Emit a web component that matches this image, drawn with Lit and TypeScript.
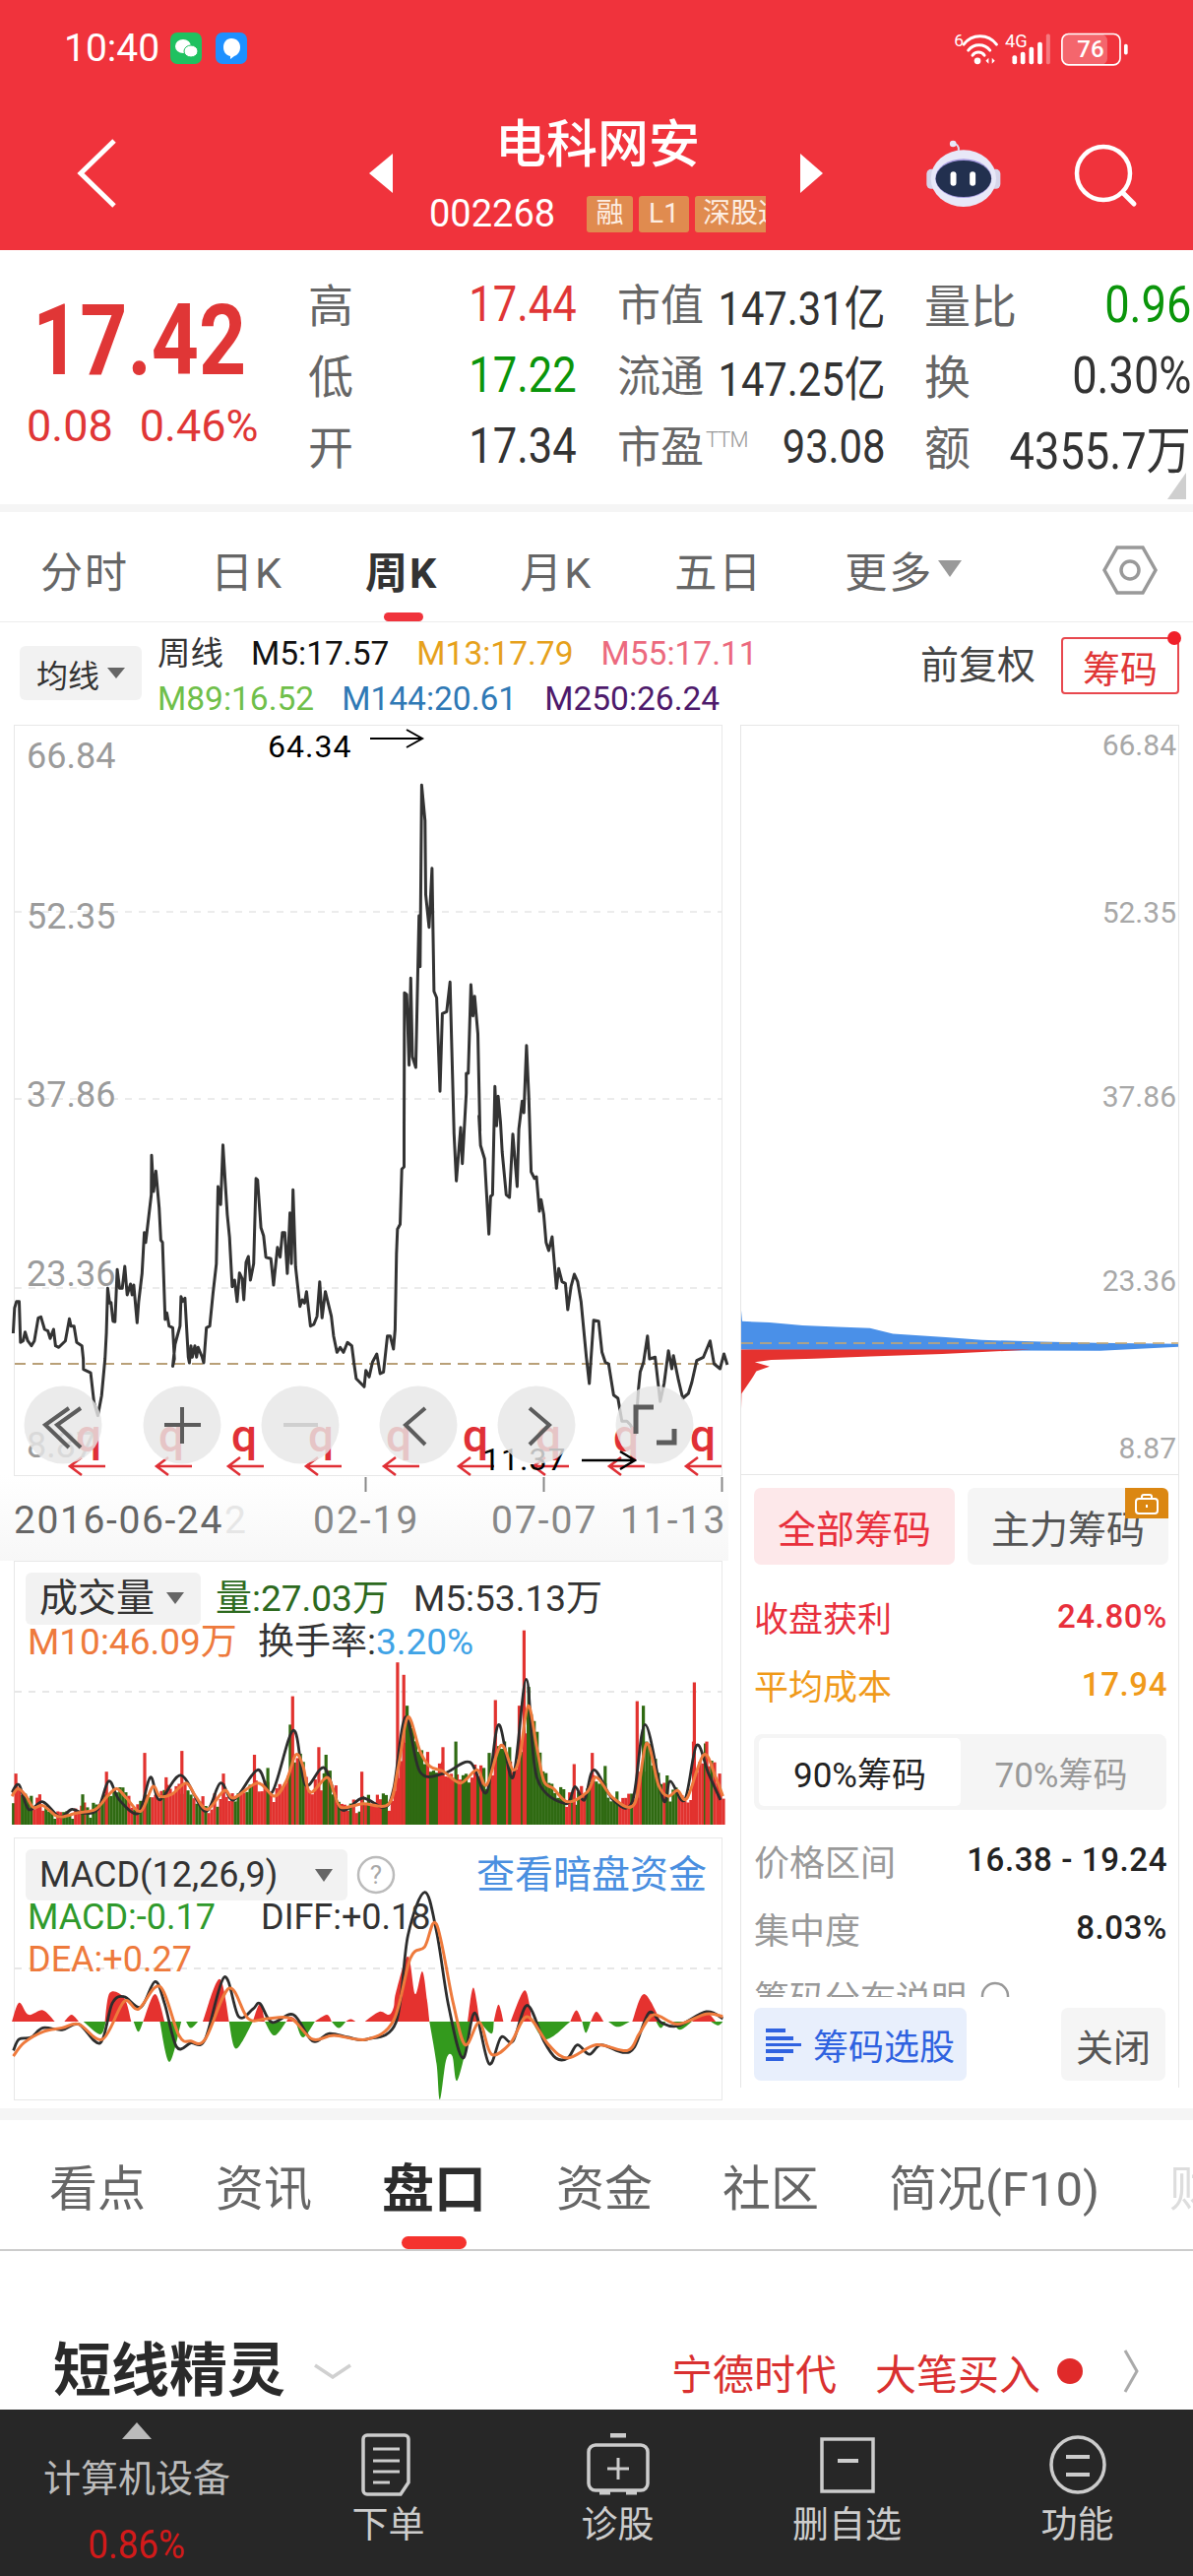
import { LitElement, html, css, svg } from "lit";
import { customElement } from "lit/decorators.js";

type P = [number, number];
const flat = (a: number[]): P[] => { const r: P[] = []; for (let i = 0; i + 1 < a.length; i += 2) r.push([a[i], a[i + 1]]); return r; };
const conv = (a: number[], ox: number, oy: number, sx: number, sy: number): P[] => flat(a).map(([x, y]) => [ox + x / sx, oy + y / sy]);
const str = (p: P[]) => p.map(([x, y]) => `${x.toFixed(1)},${y.toFixed(1)}`).join(" ");
const smooth = (p: P[]) => {
  let d = `M${p[0][0].toFixed(1)} ${p[0][1].toFixed(1)}`;
  for (let i = 0; i < p.length - 1; i++) {
    const a = p[Math.max(0, i - 1)], b = p[i], c = p[i + 1], e = p[Math.min(p.length - 1, i + 2)];
    d += `C${(b[0] + (c[0] - a[0]) / 6).toFixed(1)} ${(b[1] + (c[1] - a[1]) / 6).toFixed(1)} ${(c[0] - (e[0] - b[0]) / 6).toFixed(1)} ${(c[1] - (e[1] - b[1]) / 6).toFixed(1)} ${c[0].toFixed(1)} ${c[1].toFixed(1)}`;
  }
  return d;
};

const z7 = (a: number[]) => conv(a, 0, 1000, 2.98, 3);
const z8 = (a: number[]) => conv(a, 370, 780, 2.96, 3);
const z9 = (a: number[]) => conv(a, 370, 1100, 2.96, 3);
const z2 = (a: number[]) => conv(a, 0, 520, 2.063, 1.493);
const z6 = (a: number[]) => conv(a, 0, 1340, 2.1, 3);

const priceLine: P[] = [
  ...z7([40,1062,44,985,50,965,58,965,62,1090,70,1085,76,1058,84,1085,95,1100,104,1085,116,1015,124,1012,135,1050,145,1055,152,1078,162,1050,168,1100,178,1105,198,1085,210,1018,215,1040,224,1040,232,1090,248,1100,252,1140]),
  ...z2([175,1300,190,1305,197,1350,205,1370,213,1340]),
  ...z7([318,1140,322,1060,326,925,332,970,336,968,342,1025,348,1027,355,868,362,925,370,925,378,858,385,945,395,912,400,945,405,915,415,1030,420,965,430,880,437,755,441,785,458,640,459,520,465,630,472,568,482,680,487,778,492,785,500,1020,505,1000,512,1040,523,1045,528,1140]),
  ...z2([362,1295]),
  ...z7([530,1095,545,1040,548,950,553,965,560,955,570,1135]),
  ...z2([397,1290]),
  ...z7([578,1100,582,1135,590,1100,595,1135,600,1105,612,1135]),
  ...z2([427,1290]),
  ...z7([625,1045,635,1040,645,940,655,850,660,615,668,670,675,488,682,605,688,700,695,770,703,920,710,900,718,965,725,878,733,895,738,960,745,845,752,828,758,900,768,850,775,590,780,595,790,740,798,765,805,830,820,835,828,915,840,800,848,830,855,755,862,755,870,880,878,695,882,850,887,625,895,860,908,980,915,960,922,970,928,935,940,1040,950,1035,960,1010,968,905,975,1015,985,935,1003,1010,1010,1070,1020,1120,1030,1105,1040,1120,1052,1090,1065,1100,1070,1140]),
  ...z6([755,130,760,180]),
  ...z9([0,925,5,875,15,895,25,850,38,825,48,885,58,880,70,770,78,770,88,810,93,750,97,520,100,445,108,430,113,262,120,255]),
  ...z8([120,1105,121,685,128,690,135,905,140,640,145,880,155,912,165,450,168,605,173,52,183,160,185,385,195,485,204,305,210,680,218,700,228,985,235,748,248,742,258,652,270,1105]),
  ...z9([270,150,277,298,290,135,295,245,307,30]),
  ...z8([307,930,313,930,321,660,327,755,332,695,342,810,348,1105]),
  ...z9([345,100,350,190,362,230,375,460,380,345,386,340,393,10,398,130,403,40,410,120,415,210,427,340,437,348,447,155,460,315,465,140,475,55,480,90]),
  ...z8([488,845,495,1000]),
  ...z9([502,270,512,290,518,285,527,390,532,355,540,400,547,485,555,510,565,468,578,625,585,565,595,605,605,610,612,690,622,620,632,582,642,605,652,665,668,835,677,915,690,722,705,725,715,820,725,850,735,855,750,950,763,960,775,1030,790,1030,800,1040,815,1070,825,930,830,880,840,850,852,770,858,840,875,835,890,970,902,915,915,815,925,870,930,830,945,905,958,960,975,945,985,912,1000,845,1020,835,1040,785,1052,855,1070,870,1082,825,1092,858]),
];

const z3 = (a: number[]) => conv(a, 0, 1560, 2.063, 2.613);
const m10 = [25,690,38,670,55,690,70,720,90,715,115,740,130,745,160,735,200,725,225,690,245,670,265,695,295,730,320,665,335,690,360,685,390,655,410,690,435,725,470,675,490,695,540,655,575,690,600,650,620,580,635,610,650,680,685,640,700,680,715,720,760,710,815,710,835,610,855,480,880,570,900,610,930,625,965,655,1000,620,1020,660,1050,555,1075,620,1090,580,1107,450,1125,560,1140,650,1160,670,1190,705,1230,680,1250,640,1285,695,1330,710,1355,550,1380,660,1400,690,1420,675,1440,695,1475,580,1500,640,1515,690];
const m5 = [25,680,40,660,60,725,90,705,125,745,150,725,175,735,205,725,228,650,250,700,290,735,315,640,335,700,380,635,430,730,462,655,490,700,540,620,570,680,615,515,640,660,680,615,715,725,760,695,805,720,825,670,850,480,880,625,930,630,985,600,1020,680,1045,500,1075,640,1103,380,1125,640,1185,710,1205,665,1225,700,1245,620,1285,700,1325,705,1352,500,1390,700,1405,650,1435,700,1460,555,1485,630,1510,700];
const spikesR: P[] = flat([30,630,80,685,220,625,300,575,345,640,378,570,465,630,530,580,610,425,665,560,755,625,830,335,843,368,925,560,1035,435,1095,250,1085,450,1200,605,1238,575,1332,438,1452,388,1450,545,1478,545,1505,630]);
const spikesG: P[] = flat([170,685,558,615,605,500,680,580,850,450,952,545,1022,575,1065,560,1105,400,1265,610,1345,450,1395,635,1475,550]);
const interp = (z: number) => {
  const p = flat(m10);
  for (let i = 0; i < p.length - 1; i++) if (z >= p[i][0] && z <= p[i + 1][0]) return p[i][1] + ((z - p[i][0]) / (p[i + 1][0] - p[i][0])) * (p[i + 1][1] - p[i][1]);
  return 720;
};
let seed = 7;
const rnd = () => { seed = (seed * 16807) % 2147483647; return seed / 2147483647; };
type Bar = { x: number; y: number; c: string };
const bars: Bar[] = [];
{
  let red = true;
  for (let z = 25; z < 1515; z += 6.2) {
    if (rnd() < 0.4) red = !red;
    const top = interp(z) + (rnd() - 0.55) * 50;
    bars.push({ x: z / 2.063, y: 1560 + Math.min(top, 750) / 2.613, c: red ? "#e2322f" : "#2f6a12" });
  }
  const spike = (list: P[], c: string) => list.forEach(([z, t]) => bars.push({ x: z / 2.063, y: 1560 + t / 2.613, c }));
  spike(spikesG, "#2f6a12");
  spike(spikesR, "#e2322f");
}

const red = [[25,1288,40,1238,60,1270,90,1258,115,1288],[135,1288,150,1270,165,1288],[220,1288,230,1212,260,1225,275,1288],[300,1288,325,1215,345,1288],[425,1288,460,1175,480,1288],[530,1288,545,1240,555,1288],[600,1288,610,1275,625,1288],[660,1288,685,1270,695,1288],[725,1288,735,1282,745,1288],[765,1288,795,1262,815,1270,825,1250,830,1210,855,1115,870,1215,885,1155,895,1230,900,1288],[980,1288,992,1198,1005,1288],[1035,1288,1045,1243,1055,1288],[1070,1288,1100,1205,1115,1288],[1195,1288,1208,1258,1220,1288],[1238,1288,1250,1262,1265,1288],[1325,1288,1350,1215,1385,1288],[1450,1288,1480,1265,1500,1288]];
const green = [[175,1288,210,1322,222,1288],[280,1288,290,1315,300,1288],[335,1288,355,1395,380,1288],[390,1288,400,1305,415,1288],[480,1288,495,1360,530,1288],[555,1288,575,1325,600,1288],[620,1288,635,1330,660,1288],[695,1288,710,1305,725,1288],[900,1288,915,1400,922,1495,935,1390,948,1380,958,1445,980,1340,985,1288],[1005,1288,1030,1320,1035,1288],[1115,1288,1145,1335,1195,1288],[1220,1288,1228,1318,1238,1288],[1275,1288,1295,1302,1320,1288],[1375,1288,1385,1305,1395,1288],[1410,1288,1425,1310,1450,1288],[1490,1288,1505,1298,1515,1288]];
const diff = [28,1365,40,1335,65,1330,90,1305,130,1310,165,1295,210,1345,235,1240,260,1222,295,1250,325,1182,345,1240,370,1355,400,1345,430,1335,470,1170,500,1275,530,1255,545,1240,570,1290,615,1270,655,1340,690,1320,730,1330,770,1335,830,1290,855,1060,890,945,915,1050,940,1245,970,1385,995,1265,1025,1400,1050,1330,1075,1340,1105,1245,1140,1340,1165,1385,1190,1385,1210,1350,1235,1375,1260,1350,1305,1370,1330,1355,1360,1265,1385,1290,1420,1300,1480,1262,1515,1280];
const dea = [28,1380,50,1345,90,1315,130,1305,165,1295,215,1335,260,1235,290,1255,335,1195,375,1325,400,1340,430,1335,480,1200,520,1280,560,1280,610,1280,655,1335,700,1325,770,1335,825,1285,860,1120,890,1090,915,1030,950,1240,975,1350,1005,1290,1030,1375,1070,1345,1105,1275,1150,1350,1190,1385,1250,1350,1315,1365,1340,1320,1370,1270,1420,1295,1480,1268,1515,1275];

const z4 = (a: number[]) => conv(a, 740, 1250, 2.99, 1.742);
const blue4 = [38,135,42,160,125,162,225,167,330,170,430,172,500,182,660,188,770,193,950,196,1120,198,1370,200,1375,205,1130,212,38,210];
const red4 = [38,210,920,210,650,218,430,222,260,226,130,228,80,232,125,240,85,248,75,258,40,288,38,335];

const qs = [90, 174, 248, 326, 405, 483, 557, 636, 714];
const arrows = [69, 157, 230, 309, 388, 464, 540, 617, 695];
const circles = [64, 185, 305, 425, 545, 665];

@customElement("app-root")
export class AppRoot extends LitElement {
  static styles = css`
    :host { display: block; width: 1212px; height: 2616px; overflow: hidden; background: #fff; font-family: Roboto, "Noto Sans CJK SC", sans-serif; color: #333; }
    svg { display: block; }
    svg text { font-family: Roboto, "Noto Sans CJK SC", sans-serif; dominant-baseline: central; }
    .page { display: flex; flex-direction: column; height: 2616px; }

    .head { background: #f0333c; height: 254px; color: #fff; flex: none; }
    .status { height: 98px; display: flex; align-items: center; padding: 0 63px 0 65px; }
    .time { font-size: 39px; width: 108px; display: block; }
    .app-ico { margin-right: 14px; }
    .status-right { margin-left: auto; }
    .nav { height: 156px; display: flex; align-items: center; padding-left: 78px; }
    .tri-l { margin-left: 255px; }
    .titlebox { width: 342px; margin: 0 35px 0 37px; display: flex; flex-direction: column; align-items: flex-start; }
    .title { font-size: 52px; line-height: 70px; height: 70px; align-self: center; font-weight: 500; }
    .codeline { margin-top: 12px; display: flex; align-items: center; height: 44px; }
    .code { font-size: 38px; width: 160px; }
    .tag { background: #e08b4f; color: #fdeee3; font-size: 28px; height: 37px; line-height: 36px; border-radius: 3px; text-align: center; margin-right: 6px; overflow: hidden; white-space: nowrap; }
    .t1 { width: 47px; } .t2 { width: 51px; } .t3 { width: 72px; margin-right: 0; padding-left: 8px; box-sizing: border-box; text-align: left; border-radius: 3px 0 0 3px; }
    .robot { margin-left: 104px; }
    .search { margin-left: 67px; }

    .quote { height: 258px; flex: none; display: grid; grid-template-columns: 313px 273px 43px 268px 42px 271px; position: relative; background: #fff; }
    .big { display: flex; flex-direction: column; align-items: flex-start; padding: 46px 0 0 33px; color: #e03636; }
    .price { font-size: 100px; font-weight: 700; line-height: 92px; height: 92px; transform: scaleX(.84); transform-origin: left; }
    .chg { font-size: 45px; line-height: 60px; margin: 11px 0 0 -6px; display: flex; gap: 27px; }
    .chg span { display: inline-block; }
    .cell { display: grid; grid-template-rows: 72px 72px 72px; padding-top: 17px; }
    .kv { display: flex; align-items: center; justify-content: space-between; }
    .lab { font-size: 44px; color: #666; white-space: nowrap; flex: none; margin-left: -2px; }
    .l1 .lab { font-size: 46px; margin-left: 0; }
    .l3 .lab { font-size: 47px; margin-left: 0; }
    .val { font-size: 50px; display: inline-block; transform: scaleX(.87); transform-origin: right; white-space: nowrap; color: #333; margin: 4px 0 0 -40px; }
    .l2 .val { font-size: 48px; margin-right: -3px; }
    .l3 .val { font-size: 52px; }
    .ttm { font-size: 22px; color: #999; font-weight: 300; vertical-align: 16px; letter-spacing: -1px; margin-left: 2px; }
    .val.r { color: #e03636; } .val.g { color: #0a950a; }
    .corner { position: absolute; right: 7px; bottom: 5px; }
    .strip { height: 8px; background: #f5f5f5; flex: none; }

    .ktabs { height: 112px; flex: none; box-sizing: border-box; border-bottom: 1px solid #ececec; display: flex; align-items: stretch; gap: 83px; padding-left: 41px; font-size: 43px; letter-spacing: 2px; color: #666; position: relative; }
    .ktabs > div { display: flex; align-items: center; position: relative; padding-top: 4px; white-space: nowrap; }
    .ktabs .on { color: #333; font-weight: 700; }
    .ktabs .on::after { content: ""; position: absolute; left: 19px; bottom: 0; width: 40px; height: 9px; border-radius: 5px; background: #f0333c; }
    .caret { display: inline-block; width: 0; height: 0; border-left: 12px solid transparent; border-right: 12px solid transparent; border-top: 17px solid #999; margin-left: 5px; }
    .hex { position: absolute; left: 1120px; top: 33px; }

    .main { height: 1509px; flex: none; display: flex; }
    .lcol { width: 752px; flex: none; }
    .legend { height: 104px; display: flex; padding-left: 20px; align-items: flex-start; }
    .pick { width: 124px; height: 55px; margin-top: 24px; background: #f2f2f2; border-radius: 6px; display: flex; align-items: center; justify-content: center; font-size: 32px; color: #333; flex: none; }
    .pick i { width: 0; height: 0; border-left: 9px solid transparent; border-right: 9px solid transparent; border-top: 11px solid #666; margin-left: 8px; }
    .legs { margin-left: 16px; padding-top: 9px; font-size: 33.5px; line-height: 46px; white-space: nowrap; }
    .legs > div { display: flex; gap: 28px; height: 46px; }
    .c1 { color: #111; } .c2 { color: #e6a11c; } .c3 { color: #ec6a7e; } .c4 { color: #6fbf4a; } .c5 { color: #2f79b5; } .c6 { color: #4e1a6b; }
    .macd { margin-top: 13px; }

    .rcol { width: 446px; flex: none; }
    .rtop { height: 104px; display: flex; align-items: flex-start; justify-content: flex-end; position: relative; }
    .fq { font-size: 39px; color: #444; margin-top: 20px; line-height: 48px; margin-right: 26px; }
    .chipbtn { width: 120px; height: 58px; margin-top: 15px; box-sizing: border-box; border: 2px solid #e8484e; border-radius: 4px; color: #e03636; font-size: 38px; display: flex; align-items: center; justify-content: center; position: relative; }
    .chipbtn::after { content: ""; position: absolute; top: -8px; right: -4px; width: 14px; height: 14px; border-radius: 50%; background: #f0202a; }
    .panel { height: 1384px; box-sizing: border-box; border-left: 1px solid #e6e6e6; border-right: 1px solid #e6e6e6; border-top: 1px solid #e6e6e6; display: flex; flex-direction: column; }
    .btns { display: grid; grid-template-columns: 204px 204px; gap: 13px; padding: 13px 12px 0 13px; }
    .b { height: 78px; border-radius: 7px; display: flex; align-items: center; justify-content: center; font-size: 39px; position: relative; background: #f5f5f5; color: #555; }
    .b.on { background: #fde8ea; color: #e8303c; }
    .lock { position: absolute; right: 0; top: 0; width: 44px; height: 31px; background: #db8712; border-radius: 0 6px 0 0; display: flex; align-items: center; justify-content: center; }
    .scroll { height: 421px; overflow: hidden; margin-top: 18px; padding: 0 12px 0 13px; }
    .row { height: 69px; display: flex; align-items: center; justify-content: space-between; font-size: 35px; margin-right: -1px; }
    .row b { font-weight: 500; font-size: 33px; letter-spacing: .6px; }
    .row span { white-space: nowrap; }
    .rr { color: #e8303c; } .oo { color: #f09a1a; }
    .gr { color: #999; font-size: 36px; } .bk { color: #222; }
    .seg { margin: 16px 0 16px; height: 77px; background: #f5f5f5; border-radius: 8px; display: grid; grid-template-columns: 205px 1fr; padding: 4px 5px; box-sizing: border-box; font-size: 35px; color: #999; }
    .seg div { display: flex; align-items: center; justify-content: center; }
    .seg .on { background: #fff; color: #222; border-radius: 5px; }
    .tip { height: 70px; display: flex; align-items: center; gap: 14px; color: #999; font-size: 36px; }
    .foot { margin-top: 11px; padding: 0 13px; display: flex; justify-content: space-between; }
    .pickst { width: 216px; height: 74px; background: #e8effc; border-radius: 7px; color: #2f62e0; font-size: 36px; display: flex; align-items: center; gap: 12px; padding-left: 12px; box-sizing: border-box; white-space: nowrap; }
    .close { width: 106px; height: 74px; background: #f5f5f5; border-radius: 7px; color: #555; font-size: 38px; display: flex; align-items: center; justify-content: center; }

    .btabs { height: 145px; flex: none; box-sizing: border-box; border-top: 12px solid #f5f5f5; border-bottom: 2px solid #ccc; display: flex; gap: 71px; padding-left: 50px; font-size: 49px; color: #666; white-space: nowrap; overflow: hidden; position: relative; }
    .btabs > div { position: relative; display: flex; align-items: center; }
    .btabs .on { font-size: 53px; font-weight: 700; color: #2c2c2c; }
    .btabs .on::after { content: ""; position: absolute; left: 20px; bottom: 0; width: 66px; height: 13px; border-radius: 7px; background: #f5332e; }
    .btabs .fade { color: #ddd; }

    .sec { margin-top: 83px; height: 78px; flex: none; display: flex; align-items: center; padding-left: 54px; }
    .sec h2 { font-size: 59px; font-weight: 700; margin: 0; color: #2a2a2a; line-height: 78px; }
    .down { margin-left: 28px; }
    .news { margin-left: auto; display: flex; align-items: center; font-size: 42px; color: #d93030; padding-right: 55px; white-space: nowrap; }
    .news .n2 { margin-left: 39px; }
    .dot { width: 26px; height: 26px; border-radius: 50%; background: #e02a2a; margin: 0 41px 0 17px; }

    .bar { flex: 1; background: #272727; display: grid; grid-template-columns: 278px 233px 233px 233px 235px; color: #ccc; }
    .bl { display: flex; flex-direction: column; align-items: center; padding-top: 13px; }
    .up { width: 0; height: 0; border-left: 15px solid transparent; border-right: 15px solid transparent; border-bottom: 17px solid #bbb; }
    .bname { font-size: 38px; line-height: 46px; margin-top: 17px; color: #bbb; }
    .bpct { font-size: 40px; line-height: 44px; margin-top: 23px; color: #d21a1a; transform: scaleX(.92); }
    .bi { display: flex; flex-direction: column; align-items: center; padding-top: 24px; }
    .bi span { font-size: 37px; line-height: 44px; margin-top: 8px; }
  `;

  private priceChart() {
    const grid = [926, 1116, 1308];
    const labels: [string, number][] = [["66.84", 768], ["52.35", 931], ["37.86", 1112], ["23.36", 1294]];
    return html`<svg width="752" height="849" viewBox="0 736 752 849">
      <defs><linearGradient id="fog" x1="0" y1="0" x2="0" y2="1"><stop offset="0" stop-color="#fff"/><stop offset="1" stop-color="#f7f7f7"/></linearGradient></defs>
      <rect x="0" y="1498" width="740" height="87" fill="url(#fog)"/>
      <rect x="14.5" y="736.5" width="719" height="762" fill="#fff" stroke="#e8e8e8"/>
      ${grid.map((y) => svg`<line x1="15" x2="733" y1=${y} y2=${y} stroke="#e6e6e6" stroke-width="1.5" stroke-dasharray="7 7"/>`)}
      <line x1="15" x2="733" y1="1385" y2="1385" stroke="#b9a078" stroke-width="2" stroke-dasharray="11 7"/>
      ${labels.map(([t, y]) => svg`<text x="27" y=${y} font-size="36" fill="#9b9b9b">${t}</text>`)}
      <polyline points=${str(priceLine)} fill="none" stroke="#333" stroke-width="3" stroke-linejoin="round"/>
      <text x="272" y="758" font-size="32" fill="#000" letter-spacing="1">64.34</text>
      <path d="M376 750H428M413 741l16 9-16 9" fill="none" stroke="#000" stroke-width="2"/>
      <text x="27" y="1468" font-size="36" fill="#9b9b9b">8.87</text>
      ${qs.map((x) => svg`<text x=${x} y="1458" font-size="46" font-weight="500" fill="#e03036" text-anchor="middle">q</text>`)}
      ${arrows.map((x) => svg`<path d="M${x + 38} 1489H${x + 2}M${x + 14} 1480l-12 9 12 9" fill="none" stroke="#e03036" stroke-width="2.6"/>`)}
      <text x="490" y="1482" font-size="32" fill="#000" letter-spacing="1">11.37</text>
      <path d="M591 1483H644M630 1474l15 9-15 9" fill="none" stroke="#000" stroke-width="2.4"/>
      ${circles.map((x) => svg`<circle cx=${x} cy="1447" r="39.5" fill="#e6e6e6" fill-opacity=".82"/>`)}
      <g fill="none" stroke="#5c5c5c" stroke-width="4">
        <path d="M70 1430L46 1447l24 23M82 1430L58 1447l24 23"/>
        <path d="M167 1447H204M185 1429V1466"/>
        <path d="M288 1447H323" stroke="#cfcfcf"/>
        <path d="M432 1430L412 1447l20 20"/>
        <path d="M538 1430L558 1447l-20 20"/>
        <path d="M646 1456V1429H664M685 1451V1465H667" stroke-width="5"/>
      </g>
      <path d="M371.5 1500V1515M552.5 1500V1515M733.5 1500V1515" stroke="#888" stroke-width="2"/>
      <text x="14" y="1544" font-size="39" fill="#666" letter-spacing="1.6">2016-06-24</text>
      <text x="228" y="1544" font-size="39" fill="#e6e6e6">2</text>
      <text x="318" y="1544" font-size="39" fill="#888" letter-spacing="2">02-19</text>
      <text x="499" y="1544" font-size="39" fill="#888" letter-spacing="2">07-07</text>
      <text x="630" y="1544" font-size="39" fill="#888" letter-spacing="2">11-13</text>
    </svg>`;
  }

  private volChart() {
    return html`<svg width="752" height="268" viewBox="0 1585 752 268">
      <rect x="14.5" y="1585.5" width="719" height="267" fill="#fff" stroke="#e8e8e8"/>
      <line x1="15" x2="733" y1="1718" y2="1718" stroke="#e0e0e0" stroke-width="1.5" stroke-dasharray="7 7"/>
      ${bars.map((b) => svg`<rect x=${b.x.toFixed(1)} y=${b.y.toFixed(1)} width="3.2" height=${Math.max(0, 1853 - b.y).toFixed(1)} fill=${b.c}/>`)}
      <path d=${smooth(z3(m5))} fill="none" stroke="#2d2d2d" stroke-width="2.8"/>
      <path d=${smooth(z3(m10))} fill="none" stroke="#ee7a3c" stroke-width="3"/>
      <rect x="26" y="1597" width="178" height="53" rx="6" fill="#f2f2f2"/>
      <text x="40" y="1623" font-size="39" fill="#333">成交量</text>
      <path d="M169 1617h18l-9 12z" fill="#666"/>
      <text x="219" y="1623" font-size="37" fill="#2d6a1e">量:27.03万</text>
      <text x="420" y="1623" font-size="37" fill="#333">M5:53.13万</text>
      <text x="28" y="1667" font-size="37" fill="#ee7a3c">M10:46.09万</text>
      <text x="262" y="1667" font-size="37" fill="#333">换手率:<tspan fill="#3fa3e6">3.20%</tspan></text>
    </svg>`;
  }

  private macdChart() {
    return html`<svg class="macd" width="752" height="267" viewBox="0 1866 752 267">
      <rect x="14.5" y="1866.5" width="719" height="266" fill="#fff" stroke="#e8e8e8"/>
      <line x1="15" x2="733" y1="1999" y2="1999" stroke="#e0e0e0" stroke-width="1.5" stroke-dasharray="7 7"/>
      ${red.map((a) => svg`<path d=${smooth(z3(a)) + "Z"} fill="#e5322f"/>`)}
      ${green.map((a) => svg`<path d=${smooth(z3(a)) + "Z"} fill="#339a1d"/>`)}
      <path d=${smooth(z3(diff))} fill="none" stroke="#2d2d2d" stroke-width="2.8"/>
      <path d=${smooth(z3(dea))} fill="none" stroke="#ee7a3c" stroke-width="3"/>
      <rect x="26" y="1878" width="327" height="52" rx="6" fill="#f2f2f2"/>
      <text x="40" y="1904" font-size="36" fill="#333">MACD(12,26,9)</text>
      <path d="M320 1898h18l-9 13z" fill="#666"/>
      <circle cx="382" cy="1904" r="18" fill="none" stroke="#bbb" stroke-width="2.5"/>
      <text x="382" y="1904" font-size="26" fill="#aaa" text-anchor="middle">?</text>
      <text x="484" y="1904" font-size="39" fill="#4a8fe0">查看暗盘资金</text>
      <text x="28" y="1947" font-size="36" fill="#2f9a2c">MACD:-0.17</text>
      <text x="265" y="1947" font-size="36" fill="#333">DIFF:+0.18</text>
      <text x="28" y="1990" font-size="36" fill="#ee7a3c">DEA:+0.27</text>
    </svg>`;
  }

  private chipChart() {
    const labels: [string, number][] = [["66.84", 756], ["52.35", 926], ["37.86", 1113], ["23.36", 1300], ["8.87", 1470]];
    return html`<svg width="444" height="761" viewBox="753 737 444 761">
      ${labels.map(([t, y]) => svg`<text x="1195" y=${y} font-size="30" fill="#a8a8a8" text-anchor="end">${t}</text>`)}
      <polygon points=${str(z4(blue4))} fill="#4a90e8"/>
      <polygon points=${str(z4(red4))} fill="#e5322f"/>
      <line x1="753" x2="1197" y1="1364" y2="1364" stroke="#c9a86e" stroke-width="1.5" stroke-dasharray="12 7"/>
      <line x1="753" x2="1197" y1="1497.5" y2="1497.5" stroke="#e6e6e6"/>
    </svg>`;
  }

  render() {
    return html`<div class="page">
      <div class="head">
        <div class="status">
          <span class="time">10:40</span>
          <svg class="app-ico" width="32" height="32" viewBox="0 0 32 32"><rect width="32" height="32" rx="7" fill="#1fc160"/><ellipse cx="13" cy="14" rx="8" ry="7" fill="#fff"/><ellipse cx="21" cy="19" rx="7" ry="6" fill="#fff" stroke="#1fc160"/></svg>
          <svg class="app-ico" width="32" height="32" viewBox="0 0 32 32"><rect width="32" height="32" rx="7" fill="#1e90ff"/><path d="M16 6c6 0 9 4 9 9s-3 8-6 9l-4 3v-3c-5-1-7-5-7-9 0-5 3-9 8-9z" fill="#fff"/></svg>
          <svg class="status-right" width="182" height="37" viewBox="200 30 545 110" fill="#fff">
            <text x="207" y="60" font-size="52" fill="#fff">6</text>
            <g fill="none" stroke="#fff" stroke-width="9" stroke-linecap="round">
              <path d="M236 72a62 62 0 0 1 100 0M250 90a42 42 0 0 1 66 0M263 105a22 22 0 0 1 36 0"/>
            </g>
            <circle cx="278" cy="122" r="10"/><path d="M312 113l-9 9 9 9zM322 113l9 9-9 9z"/>
            <text x="362" y="64" font-size="56" fill="#fff" textLength="68" lengthAdjust="spacingAndGlyphs">4G</text>
            <rect x="384" y="105" width="14" height="27" rx="6"/><rect x="409" y="95" width="14" height="37" rx="6"/><rect x="435" y="80" width="14" height="52" rx="6"/><rect x="461" y="65" width="14" height="67" rx="6"/>
            <rect x="487" y="40" width="12" height="92" rx="5" opacity=".35"/>
            <rect x="535" y="40" width="138" height="94" rx="20" opacity=".25"/>
            <rect x="535" y="40" width="177" height="94" rx="20" fill="none" stroke="#fff" stroke-width="5"/>
            <rect x="724" y="71" width="11" height="32" rx="5"/>
            <text x="622" y="88" font-size="72" fill="#fff" text-anchor="middle" font-weight="500">76</text>
          </svg>
        </div>
        <div class="nav">
          <svg width="42" height="70" viewBox="0 0 42 70"><path d="M38 2L4 35l34 33" fill="none" stroke="#fff" stroke-width="5"/></svg>
          <svg class="tri-l" width="24" height="40" viewBox="0 0 24 40"><path d="M24 0V40L0 20z" fill="#fff"/></svg>
          <div class="titlebox">
            <div class="title">电科网安</div>
            <div class="codeline"><span class="code">002268</span><span class="tag t1">融</span><span class="tag t2">L1</span><span class="tag t3">深股通</span></div>
          </div>
          <svg width="23" height="40" viewBox="0 0 23 40"><path d="M0 0V40L23 20z" fill="#fff"/></svg>
          <svg class="robot" width="78" height="72" viewBox="120 360 235 215">
            <path d="M222 398c2-14-6-22-18-22" fill="none" stroke="#dcdcf0" stroke-width="6"/><circle cx="205" cy="377" r="10" fill="#e8e8f8"/>
            <rect x="124" y="455" width="226" height="60" rx="14" fill="#d5d5ea"/>
            <ellipse cx="237" cy="483" rx="100" ry="87" fill="#e8e8f8"/>
            <ellipse cx="237" cy="483" rx="86" ry="60" fill="#a79be0"/>
            <ellipse cx="237" cy="484" rx="85" ry="56" fill="#22304f"/>
            <rect x="197" y="462" width="18" height="44" rx="9" fill="#fff"/><rect x="256" y="462" width="18" height="44" rx="9" fill="#fff"/>
          </svg>
          <svg class="search" width="76" height="76" viewBox="1085 138 76 76"><circle cx="1121" cy="176" r="27" fill="none" stroke="#fff" stroke-width="4.5"/><path d="M1141 196l11 11" stroke="#fff" stroke-width="5" stroke-linecap="round"/></svg>
        </div>
      </div>

      <div class="quote">
        <div class="big">
          <div class="price">17.42</div>
          <div class="chg"><span>0.08</span><span>0.46%</span></div>
        </div>
        <div class="cell l1">
          <div class="kv"><span class="lab">高</span><span class="val r">17.44</span></div>
          <div class="kv"><span class="lab">低</span><span class="val g">17.22</span></div>
          <div class="kv"><span class="lab">开</span><span class="val">17.34</span></div>
        </div>
        <div></div>
        <div class="cell l2">
          <div class="kv"><span class="lab">市值</span><span class="val">147.31亿</span></div>
          <div class="kv"><span class="lab">流通</span><span class="val">147.25亿</span></div>
          <div class="kv"><span class="lab">市盈<span class="ttm">TTM</span></span><span class="val">93.08</span></div>
        </div>
        <div></div>
        <div class="cell l3">
          <div class="kv"><span class="lab">量比</span><span class="val g">0.96</span></div>
          <div class="kv"><span class="lab">换</span><span class="val">0.30%</span></div>
          <div class="kv"><span class="lab">额</span><span class="val">4355.7万</span></div>
        </div>
        <svg class="corner" width="19" height="27" viewBox="0 0 19 27"><path d="M19 0V27H0z" fill="#cfcfcf"/></svg>
      </div>
      <div class="strip"></div>

      <div class="ktabs">
        <div>分时</div><div>日K</div><div class="on">周K</div><div>月K</div><div>五日</div><div>更多<i class="caret"></i></div>
        <svg class="hex" width="56" height="52" viewBox="0 0 56 52"><path d="M15 3H41L54 26 41 49H15L2 26z" fill="none" stroke="#999" stroke-width="3.5"/><circle cx="28" cy="26" r="9" fill="none" stroke="#999" stroke-width="3.5"/></svg>
      </div>

      <div class="main">
        <div class="lcol">
          <div class="legend">
            <div class="pick">均线<i></i></div>
            <div class="legs">
              <div><span>周线</span><span class="c1">M5:17.57</span><span class="c2">M13:17.79</span><span class="c3">M55:17.11</span></div>
              <div><span class="c4">M89:16.52</span><span class="c5">M144:20.61</span><span class="c6">M250:26.24</span></div>
            </div>
          </div>
          ${this.priceChart()}
          ${this.volChart()}
          ${this.macdChart()}
        </div>
        <div class="rcol">
          <div class="rtop"><span class="fq">前复权</span><span class="chipbtn">筹码</span></div>
          <div class="panel">
            ${this.chipChart()}
            <div class="btns">
              <div class="b on">全部筹码</div>
              <div class="b">主力筹码
                <span class="lock"><svg width="26" height="22" viewBox="0 0 26 22"><rect x="2" y="6" width="22" height="15" rx="3" fill="none" stroke="#fff" stroke-width="2"/><path d="M8 6V4a2 2 0 0 1 2-2h6a2 2 0 0 1 2 2v2" fill="none" stroke="#fff" stroke-width="2"/><rect x="12" y="12" width="2" height="3" fill="#fff"/></svg></span>
              </div>
            </div>
            <div class="scroll">
              <div class="row rr"><span>收盘获利</span><b>24.80%</b></div>
              <div class="row oo"><span>平均成本</span><b>17.94</b></div>
              <div class="seg"><div class="on">90%筹码</div><div>70%筹码</div></div>
              <div class="row"><span class="gr">价格区间</span><b class="bk">16.38 - 19.24</b></div>
              <div class="row"><span class="gr">集中度</span><b class="bk">8.03%</b></div>
              <div class="tip"><span>筹码分布说明</span><svg width="30" height="30" viewBox="0 0 30 30"><circle cx="15" cy="15" r="13" fill="none" stroke="#999" stroke-width="2.5"/></svg></div>
            </div>
            <div class="foot">
              <div class="pickst"><svg width="36" height="36" viewBox="0 0 36 36" fill="#2f62e0"><rect y="2" width="20" height="4"/><rect y="10" width="28" height="4"/><rect y="17" width="36" height="3"/><rect y="23" width="28" height="4"/><rect y="31" width="18" height="4"/></svg><span>筹码选股</span></div>
              <div class="close">关闭</div>
            </div>
          </div>
        </div>
      </div>

      <div class="btabs">
        <div>看点</div><div>资讯</div><div class="on">盘口</div><div>资金</div><div>社区</div><div>简况(F10)</div><div class="fade">财务</div>
      </div>

      <div class="sec">
        <h2>短线精灵</h2>
        <svg class="down" width="40" height="16" viewBox="0 0 40 16"><path d="M2 2l18 12L38 2" fill="none" stroke="#d0d0d0" stroke-width="3.5"/></svg>
        <div class="news"><span>宁德时代</span><span class="n2">大笔买入</span><i class="dot"></i><svg width="16" height="44" viewBox="0 0 16 44"><path d="M2 1l12 21L2 43" fill="none" stroke="#aaa" stroke-width="3"/></svg></div>
      </div>

      <div class="bar">
        <div class="bl"><i class="up"></i><div class="bname">计算机设备</div><div class="bpct">0.86%</div></div>
        <div class="bi"><svg width="64" height="64" viewBox="0 0 64 64" fill="none" stroke="#ccc" stroke-width="3.5"><path d="M10 2H48a4 4 0 0 1 4 4V50L44 62H10a4 4 0 0 1-4-4V6a4 4 0 0 1 4-4z"/><path d="M16 16H43M16 28H43M16 39H43M16 50H33" stroke-width="3"/></svg><span>下单</span></div>
        <div class="bi"><svg width="64" height="64" viewBox="0 0 64 64" fill="none" stroke="#ccc" stroke-width="3.5"><path d="M24 2H40" stroke-width="5"/><rect x="2" y="12" width="60" height="46" rx="7"/><path d="M32 25V47M21 36H43" stroke-width="3"/><path d="M13 60H24M40 60H51" stroke-width="5"/></svg><span>诊股</span></div>
        <div class="bi"><svg width="64" height="64" viewBox="0 0 64 64" fill="none" stroke="#ccc" stroke-width="3.5"><rect x="6" y="6" width="52" height="53"/><path d="M22 28H43" stroke-width="4"/></svg><span>删自选</span></div>
        <div class="bi"><svg width="64" height="64" viewBox="0 0 64 64" fill="none" stroke="#ccc" stroke-width="3.5"><ellipse cx="32" cy="32" rx="27" ry="28"/><path d="M20 24H44M20 42H44" stroke-width="4"/></svg><span>功能</span></div>
      </div>
    </div>`;
  }
}
